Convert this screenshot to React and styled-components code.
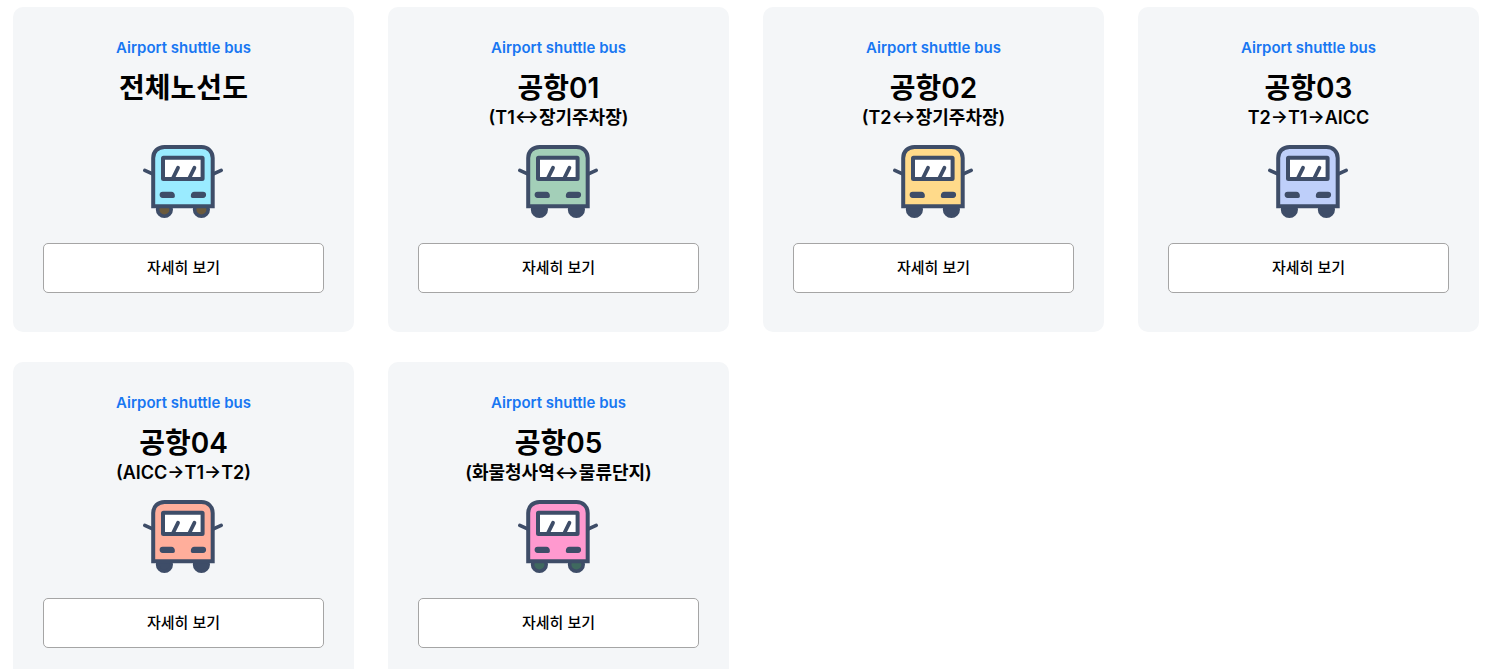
import React from 'react';
import styled, { createGlobalStyle } from 'styled-components';

const GlobalStyle = createGlobalStyle`
  * {
    box-sizing: border-box;
  }

  body {
    margin: 0;
    background: #fff;
    color: #000;
    font-family: Inter, 'Noto Sans CJK KR', sans-serif;
  }
`;

const RouteList = styled.ul`
  display: grid;
  grid-template-columns: repeat(4, 1fr);
  gap: 30px 34px;
  margin: 0;
  padding: 7px 18px 7px 13px;
  list-style: none;
`;

const RouteCard = styled.li`
  display: flex;
  flex-direction: column;
  align-items: center;
  padding: 30px 30px 39px;
  border-radius: 10px;
  background: #f4f6f8;
  text-align: center;
`;

const Label = styled.p`
  margin: 0 0 13px;
  color: #1877f2;
  font-size: 15px;
  font-weight: 600;
  line-height: 22px;
`;

const Title = styled.h2`
  margin: 0;
  font-size: 28px;
  font-weight: 600;
  line-height: 32px;
`;

const Course = styled.p`
  min-height: 28px;
  margin: 0 0 13px;
  font-size: 18px;
  font-weight: 600;
  line-height: 28px;
`;

const BusIcon = styled.svg`
  display: block;
  width: 81px;
  height: 74px;
  margin-bottom: 24px;
`;

const DetailButton = styled.button`
  width: 100%;
  height: 50px;
  padding: 0 0 4px;
  border: 1px solid #a5a5a5;
  border-radius: 5px;
  background: #fff;
  color: #000;
  font-family: inherit;
  font-size: 15px;
  font-weight: 500;
  cursor: pointer;
`;

const NAVY = '#3e4d68';

const routes = [
  { title: '전체노선도', course: '', color: '#9aebff', wheel: '#6b5a3c' },
  { title: '공항01', course: '(T1↔장기주차장)', color: '#a3cfb8', wheel: NAVY },
  { title: '공항02', course: '(T2↔장기주차장)', color: '#ffda8a', wheel: NAVY },
  { title: '공항03', course: 'T2→T1→AICC', color: '#becffa', wheel: NAVY },
  { title: '공항04', course: '(AICC→T1→T2)', color: '#ffae9b', wheel: NAVY },
  {
    title: '공항05',
    course: '(화물청사역↔물류단지)',
    color: '#ff99cf',
    wheel: '#3f695f',
  },
];

const Bus = ({ color, wheel }) => (
  <BusIcon viewBox="0 0 81 74" fill="none" aria-hidden="true">
    <g fill={wheel} stroke={NAVY} strokeWidth="3.6">
      <circle cx="21.4" cy="64.4" r="6.8" />
      <circle cx="58.4" cy="64.4" r="6.8" />
    </g>
    <path
      d="M10.2 61.2V13C10.2 6.5 15 2 21.500 2h37C65 2 69.700 6.500 69.700 13v48.200z"
      fill={color}
      stroke={NAVY}
      strokeWidth="4"
    />
    <path
      d="M1.8 25.4l7.2 3.3M78.2 25.4l-7.2 3.3"
      stroke={NAVY}
      strokeWidth="3.6"
      strokeLinecap="round"
    />
    <rect
      x="20"
      y="12.7"
      width="39.600"
      height="21.4"
      rx="0.5"
      fill="#fff"
      stroke={NAVY}
      strokeWidth="4"
    />
    <path
      d="M35 22.8L29.5 34M51.400 22.8L45.900 34"
      stroke={NAVY}
      strokeWidth="3.8"
      strokeLinecap="round"
    />
    <path
      d="M19.7 46.7h8.6q3.6 0 3.6 4.5 0 1.7-1.7 1.7H19.7a3 3 0 0 1 0-6.2zM60 46.7h-8.6q-3.6 0-3.6 4.5 0 1.7 1.7 1.7H60a3 3 0 0 0 0-6.2z"
      fill={NAVY}
    />
  </BusIcon>
);

const App = () => (
  <>
    <GlobalStyle />
    <RouteList>
      {routes.map(({ title, course, color, wheel }) => (
        <RouteCard key={title}>
          <Label>Airport shuttle bus</Label>
          <Title>{title}</Title>
          <Course>{course}</Course>
          <Bus color={color} wheel={wheel} />
          <DetailButton type="button">자세히 보기</DetailButton>
        </RouteCard>
      ))}
    </RouteList>
  </>
);

export default App;
